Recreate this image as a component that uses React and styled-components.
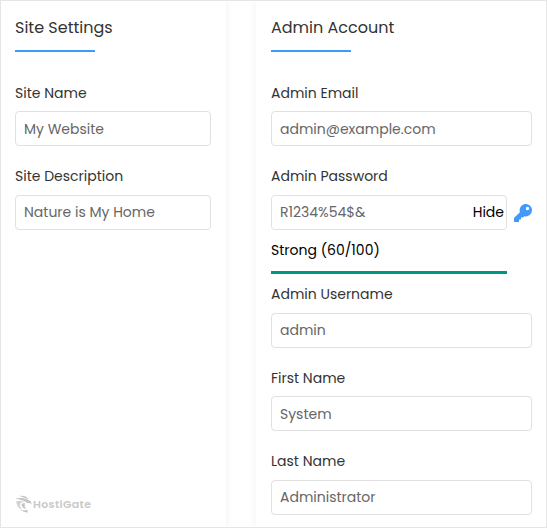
import React from "react";
import styled, { createGlobalStyle } from "styled-components";

const GlobalStyle = createGlobalStyle`
  * { box-sizing: border-box; }
  body {
    margin: 0;
    background: #fff;
    font-family: Poppins, Inter, "Open Sans", sans-serif;
    font-size: 14px;
    color: #333;
  }
`;

const Page = styled.main`
  display: flex;
  gap: 30px;
  width: 547px;
  height: 528px;
  border: 1px solid #e5e5e5;
  overflow: hidden;
`;

const Panel = styled.section`
  display: flex;
  flex-direction: column;
  width: ${({ $width }) => $width};
  flex: none;
  padding: ${({ $padding }) => $padding};
  background: #fff;
  box-shadow: 0 0 9px rgba(0, 0, 0, 0.06);
`;

const Title = styled.h2`
  margin: 0 0 30.4px;
  height: 39px;
  font-size: 16px;
  font-weight: 400;
  line-height: 30px;
  white-space: nowrap;
  &::after {
    content: "";
    display: block;
    width: 80px;
    height: 2px;
    margin-top: 7px;
    background: #4299fc;
  }
`;

const Field = styled.div`
  display: flex;
  flex-direction: column;
  height: ${({ $height }) => $height || 83.5}px;
  flex: none;
`;

const Label = styled.label`
  height: 29px;
  padding-top: 0.3px;
  line-height: 21px;
  white-space: nowrap;
`;

const Input = styled.input`
  width: 100%;
  height: 35px;
  padding: 0.3px 8px 0;
  border: 1px solid #e1e1e1;
  border-radius: 4px;
  outline: none;
  background: #fff;
  color: #666;
  font: inherit;
`;

const PasswordRow = styled.div`
  display: flex;
  align-items: center;
  gap: 7px;
`;

const PasswordBox = styled.div`
  display: flex;
  align-items: center;
  width: 236px;
  height: 35px;
  padding-right: 2px;
  border: 1px solid #e1e1e1;
  border-radius: 4px;
`;

const PasswordInput = styled(Input)`
  flex: 1;
  min-width: 0;
  height: 33px;
  padding-top: 0;
  border: 0;
`;

const TextButton = styled.button`
  padding: 0;
  border: 0;
  background: none;
  color: #000;
  font: inherit;
`;

const Strength = styled.div`
  width: 236px;
  height: 34px;
  margin-top: 10px;
  border-bottom: 3px solid #009683;
  color: #000;
  line-height: 21px;
`;

const Brand = styled.div`
  display: flex;
  align-items: center;
  gap: 1px;
  height: 18px;
  margin-top: auto;
  margin-bottom: 2px;
  color: #c9c9c9;
  font-size: 11px;
  font-weight: 600;
  letter-spacing: 0.35px;
`;

const KeySvg = styled.svg`
  flex: none;
  margin-top: 1.2px;
`;

const KeyIcon = () => (
  <KeySvg width="18" height="18" viewBox="0 0 512 512" fill="#4299fc" aria-hidden="true">
    <path d="M512 176a176 176 0 0 1-219.300 170.300L256 384h-56v56h-56v48a24 24 0 0 1-24 24H24a24 24 0 0 1-24-24v-78a24 24 0 0 1 7-17l161.800-161.800A176 176 0 1 1 512 176zM336 128a48 48 0 1 0 96 0 48 48 0 0 0-96 0z" />
  </KeySvg>
);

const EagleIcon = () => (
  <svg width="17" height="18" viewBox="0 0 17 18" fill="#c4c4c4" aria-hidden="true">
    <path d="M4 .8C8 .3 12 .8 13.800 4.300 11 3 8 2.500 4 .8z" />
    <path d="M0 3.600c4-.8 9-1 13 1.200 2.300.7 3.500 2 3.600 4.600-1.300-1.200-2.600-1.500-4.200-1.200C8.500 5 5 5 0 3.600z" />
    <path d="M1.200 6.500c3-.7 6-.7 8.600.6-3.300-.1-5 .9-4.800 3.200.1 1.700 1 3 2.400 4.200C4 13.800 1.600 11 1.200 6.500z" opacity=".75" />
    <path d="M6.400 9.200c1.200-1.200 2.600-1.300 3.900-.6-1.200 1.500-.7 3.500 1 5.700C8.500 13.400 6.800 12 6.400 9.200zM5.500 14.800c2.500.6 4.500.7 6.800.2L13 17.500c-3-.2-5.500-1-7.500-2.700z" />
  </svg>
);

const FormField = ({ id, label, value }) => (
  <Field>
    <Label htmlFor={id}>{label}</Label>
    <Input id={id} defaultValue={value} />
  </Field>
);

export default function App() {
  return (
    <>
      <GlobalStyle />
      <Page>
        <Panel $width="225px" $padding="12px 15px 12px 14px">
          <Title>Site Settings</Title>
          <FormField id="site-name" label="Site Name" value="My Website" />
          <FormField id="site-description" label="Site Description" value="Nature is My Home" />
          <Brand>
            <EagleIcon />
            <span>HostiGate</span>
          </Brand>
        </Panel>
        <Panel $width="290px" $padding="12px 14px 12px 15px">
          <Title>Admin Account</Title>
          <FormField id="email" label="Admin Email" value="admin@example.com" />
          <Field $height={118}>
            <Label htmlFor="password">Admin Password</Label>
            <PasswordRow>
              <PasswordBox>
                <PasswordInput id="password" defaultValue="R1234%54$&amp;" />
                <TextButton type="button">Hide</TextButton>
              </PasswordBox>
              <KeyIcon />
            </PasswordRow>
            <Strength>Strong (60/100)</Strength>
          </Field>
          <FormField id="username" label="Admin Username" value="admin" />
          <FormField id="first-name" label="First Name" value="System" />
          <FormField id="last-name" label="Last Name" value="Administrator" />
        </Panel>
      </Page>
    </>
  );
}
